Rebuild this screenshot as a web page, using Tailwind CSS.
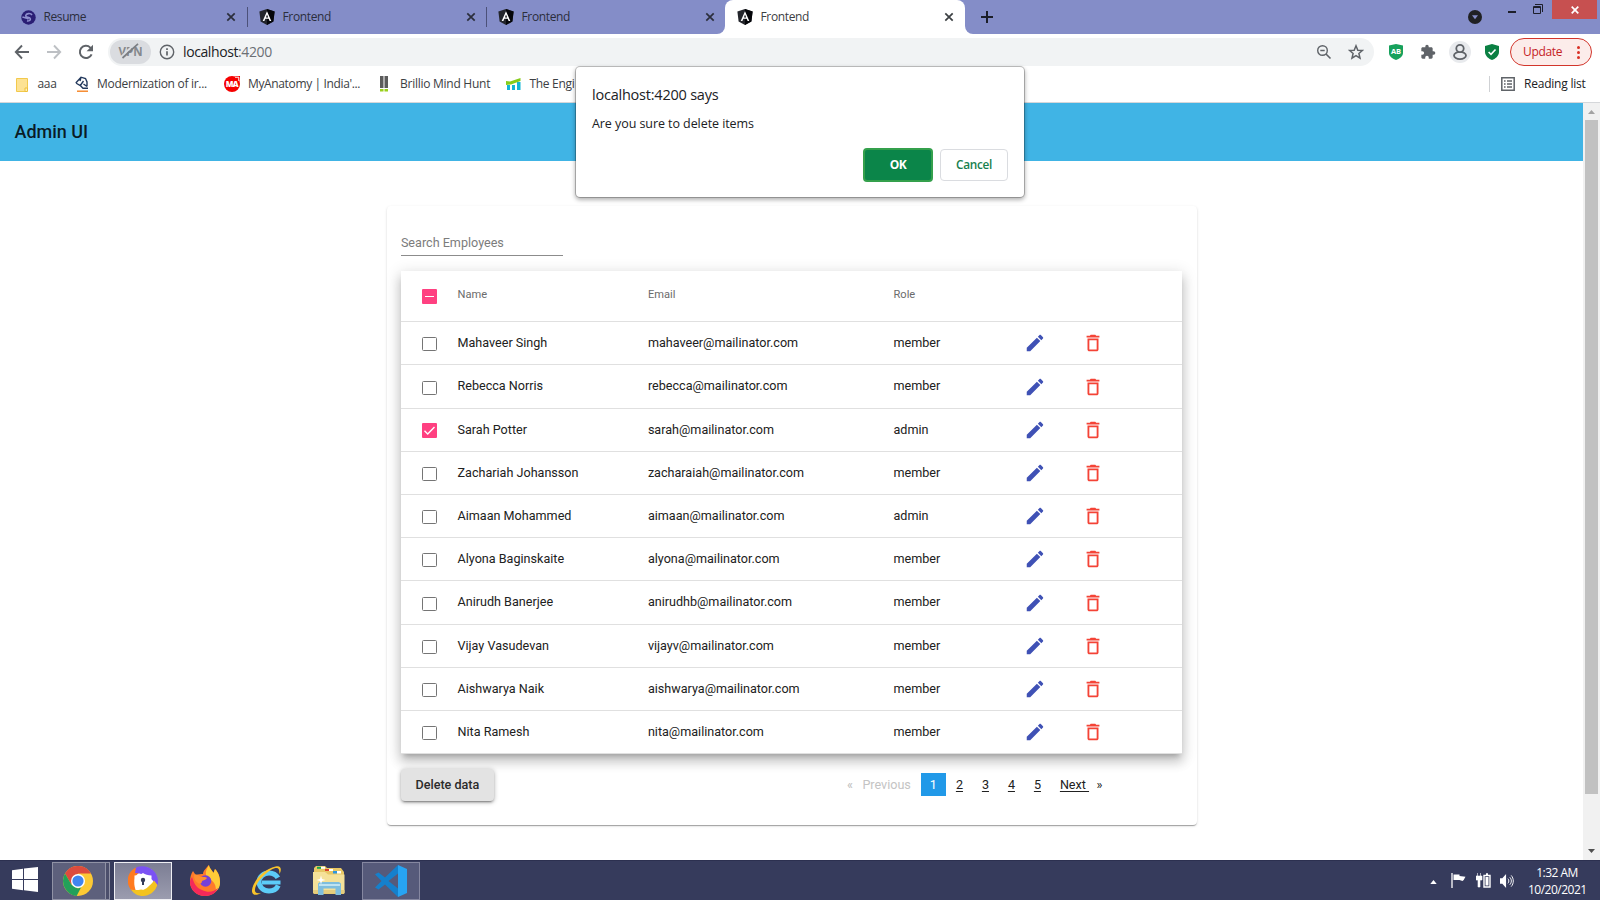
<!DOCTYPE html>
<html lang="en">
<head>
<meta charset="utf-8">
<title>Frontend</title>
<script src="https://cdn.jsdelivr.net/npm/@tailwindcss/browser@4"></script>
</head>
<body class="w-[1600px] h-[900px] overflow-hidden bg-white flex flex-col relative font-['Open_Sans',sans-serif] text-[12px] text-[#3c4043]">

<svg class="hidden">
  <symbol id="angular" viewBox="0 0 16 16"><path d="M8 0 15.6 2.6 14.4 12.6 8 16 1.600 12.6.4 2.600z" fill="#23252b"/><path d="M8 0 15.600 2.600 14.400 12.600 8 16z" fill="#05060a"/><path d="M8 2.200 3.700 12h1.700l.9-2.200h3.400l.9 2.200h1.700zM8 5.400 9.100 8.400H6.900z" fill="#fff"/></symbol>
  <symbol id="x" viewBox="0 0 10 10"><path d="M1.300 1.300 8.700 8.700M8.700 1.300 1.300 8.700" stroke="currentColor" stroke-width="1.700" fill="none"/></symbol>
  <symbol id="edit" viewBox="0 0 24 24"><path d="M3 17.250V21h3.750L17.810 9.940l-3.750-3.750L3 17.250zM20.710 7.040c.39-.39.39-1.020 0-1.410l-2.340-2.340c-.39-.39-1.020-.39-1.410 0l-1.830 1.830 3.750 3.750 1.830-1.830z" fill="#3f51b5"/></symbol>
  <symbol id="trash" viewBox="0 0 24 24"><path d="M6 19c0 1.100.9 2 2 2h8c1.100 0 2-.9 2-2V7H6v12zM8 9h8v10H8V9zm7.500-5-1-1h-5l-1 1H5v2h14V4z" fill="#f44336"/></symbol>
</svg>

<!-- Tab strip -->
<div class="h-[34px] shrink-0 bg-[#848dc8] flex text-[#2b2e3c]">
  <div class="w-[248px] flex items-center pl-[20.500px] pr-[11px] border-r border-transparent">
    <svg class="size-[15px]" viewBox="0 0 16 16"><circle cx="8" cy="8" r="7.700" fill="#2a1e74"/><path d="M11.800 5.200C10 3 5.500 3.500 5 6c-.3 2.300 4.500 1.300 5 3.400.3 1.800-2 2.600-3.600 2.200M1.500 7.500C4 8.500 7 8 8 10" stroke="#8f90cf" stroke-width="1.700" fill="none"/></svg>
    <span class="ml-[8px] text-[12px] tracking-[-0.400px]">Resume</span>
    <svg class="ml-auto size-[10px]"><use href="#x"/></svg>
  </div>
  <div class="w-px h-5 mt-[7px] bg-[#4c5179] -ml-px"></div>
  <div class="w-[238px] flex items-center pl-[11px] pr-[10px]">
    <svg class="size-4"><use href="#angular"/></svg>
    <span class="ml-[7.500px] text-[12px] tracking-[-0.350px]">Frontend</span>
    <svg class="ml-auto size-[10px]"><use href="#x"/></svg>
  </div>
  <div class="w-px h-5 mt-[7px] bg-[#4c5179]"></div>
  <div class="w-[238px] flex items-center pl-[11px] pr-[10px]">
    <svg class="size-4"><use href="#angular"/></svg>
    <span class="ml-[7.500px] text-[12px] tracking-[-0.350px]">Frontend</span>
    <svg class="ml-auto size-[10px]"><use href="#x"/></svg>
  </div>
  <div class="relative w-[240px] flex items-center pl-[12px] pr-[11px] bg-white rounded-t-lg text-[#3c4043]">
    <div class="absolute bottom-0 -left-2 size-2 bg-white"><div class="size-2 bg-[#848dc8] rounded-br-lg"></div></div>
    <div class="absolute bottom-0 -right-2 size-2 bg-white"><div class="size-2 bg-[#848dc8] rounded-bl-lg"></div></div>
    <svg class="size-4"><use href="#angular"/></svg>
    <span class="ml-[7.500px] text-[12px] tracking-[-0.350px]">Frontend</span>
    <svg class="ml-auto size-[10px]"><use href="#x"/></svg>
  </div>
  <svg class="ml-4 mt-[11px] size-3" viewBox="0 0 12 12"><path d="M6 0v12M0 6h12" stroke="#1b1d29" stroke-width="2"/></svg>
  <div class="ml-auto flex pr-[3px]">
    <svg class="mt-[10px] size-[14px] mr-[26px]" viewBox="0 0 14 14"><circle cx="7" cy="7" r="7" fill="#202124"/><path d="M4 5.200h6L7 9.300z" fill="#848dc8"/></svg>
    <div class="mt-[11px] w-2 h-[2px] mr-[17px] bg-[#1d1f2b]"></div>
    <svg class="mt-1 mr-[9px] w-[10px] h-[10px]" viewBox="0 0 10 10"><path d="M.5 2.500h7v7h-7zM.5 3.500h7M2 .5h7.500V8" stroke="#1d1f2b" fill="none"/></svg>
    <div class="w-[45px] h-[19px] bg-[#c75050] text-white grid place-items-center"><svg class="size-[8px]" viewBox="0 0 8 8"><path d="M.7.7l6.600 6.600M7.300.7.700 7.300" stroke="#fff" stroke-width="1.700"/></svg></div>
  </div>
</div>

<!-- Toolbar -->
<div class="h-[36px] shrink-0 flex items-center pl-[14px] pr-2 text-[#5f6368]">
  <svg class="size-4" viewBox="0 0 16 16"><path d="M15 8H2M8 1.500 1.800 8 8 14.500" stroke="#5f6368" stroke-width="1.900" fill="none"/></svg>
  <svg class="ml-4 size-4" viewBox="0 0 16 16"><path d="M1 8h13M8 1.500 14.200 8 8 14.500" stroke="#bdc0c4" stroke-width="1.900" fill="none"/></svg>
  <svg class="ml-4 size-4" viewBox="0 0 16 16"><path d="M13.600 10.300A6.100 6.100 0 1 1 12.300 3.600l1.500 1.500" stroke="#5f6368" stroke-width="2" fill="none"/><path d="M15 .8v6.400H8.600z" fill="#5f6368"/></svg>
  <div class="ml-[14px] w-[1266px] h-[28px] rounded-full bg-[#f1f3f4] flex items-center pl-[2px] pr-[10px]">
    <div class="relative w-[41px] h-6 rounded-full bg-[#dadce0] grid place-items-center">
      <span class="text-[11.500px] font-bold text-[#85888d] leading-none">VPN</span>
      <svg class="absolute left-[8px] top-[3px] w-[22px] h-[16px]" viewBox="0 0 22 16"><path d="M3.500 13.500 17 .5" stroke="#dadce0" stroke-width="1.800"/><path d="M4.500 15 20 .8" stroke="#7b7e83" stroke-width="1.700"/></svg>
    </div>
    <svg class="ml-2 size-4" viewBox="0 0 16 16"><circle cx="8" cy="8" r="6.700" fill="none" stroke="#5f6368" stroke-width="1.400"/><path d="M8 7.200v4.300M8 4.200v1.700" stroke="#5f6368" stroke-width="1.700"/></svg>
    <span class="ml-2 mb-px text-[14px] tracking-[-0.400px] text-[#202124]">localhost<span class="text-[#6b6f74]">:4200</span></span>
    <svg class="ml-auto size-4" viewBox="0 0 16 16"><circle cx="6.500" cy="6.500" r="4.800" fill="none" stroke="#5f6368" stroke-width="1.400"/><path d="M10 10l4.500 4.500M4.300 6.500h4.400" stroke="#5f6368" stroke-width="1.600"/></svg>
    <svg class="ml-4 size-4" viewBox="0 0 16 16"><path d="M8 1.800 9.800 6.200l4.600.3-3.500 3 1.100 4.600L8 11.600l-4 2.500 1.100-4.600-3.500-3 4.600-.3z" fill="none" stroke="#5f6368" stroke-width="1.500"/></svg>
  </div>
  <div class="flex items-center flex-1">
    <svg class="ml-[15px] w-[14px] h-4" viewBox="0 0 14 16"><path d="M7 0 14 1.500V9c0 3.500-4 6-7 7-3-1-7-3.500-7-7V1.500z" fill="#17a15c"/><text x="7" y="9.800" font-family="Open Sans" font-size="7.500" font-weight="700" fill="#fff" text-anchor="middle">AB</text></svg>
    <svg class="ml-[17px] size-[16px]" viewBox="0 0 24 24"><path d="M20.500 11H19V7c0-1.100-.9-2-2-2h-4V3.500a2.500 2.500 0 0 0-5 0V5H4c-1.100 0-2 .9-2 2v3.800h1.500a2.700 2.700 0 0 1 0 5.400H2V20c0 1.100.9 2 2 2h3.800v-1.500a2.700 2.700 0 0 1 5.400 0V22H17c1.100 0 2-.9 2-2v-4h1.500a2.500 2.500 0 0 0 0-5z" fill="#5f6368"/></svg>
    <svg class="ml-[13px] size-[22px]" viewBox="0 0 22 22"><circle cx="11" cy="11" r="11" fill="#e8eaed"/><ellipse cx="11" cy="14.500" rx="6" ry="3.600" fill="none" stroke="#5f6368" stroke-width="1.800"/><circle cx="11" cy="7.500" r="3.700" fill="#e8eaed" stroke="#5f6368" stroke-width="1.800"/></svg>
    <svg class="ml-[14px] w-[14px] h-4" viewBox="0 0 14 16"><path d="M7 0 14 2v6c0 4-4 7-7 8-3-1-7-4-7-8V2z" fill="#0b8043"/><path d="M3.600 8 6 10.300 10.500 5.500" stroke="#fff" stroke-width="1.600" fill="none"/></svg>
    <div class="ml-auto w-[82px] h-[28px] border border-[#d2352b] bg-[#fcecea] rounded-full flex items-center pl-3 pr-[11px] text-[#c5221f]">
      <span class="mb-px text-[12px] tracking-[-0.350px]">Update</span>
      <svg class="ml-auto w-[3px] h-[13px]" viewBox="0 0 3 13"><circle cx="1.500" cy="1.500" r="1.500" fill="#d93025"/><circle cx="1.500" cy="6.500" r="1.500" fill="#d93025"/><circle cx="1.500" cy="11.500" r="1.500" fill="#d93025"/></svg>
    </div>
  </div>
</div>

<!-- Bookmarks -->
<div class="h-[33px] shrink-0 flex items-center pl-4 pr-[14px] pb-[4px] border-b border-[#d5d7da] text-[12px] tracking-[-0.300px] whitespace-nowrap">
  <svg class="mt-px w-[12px] h-[14px]" viewBox="0 0 12 14"><path d="M.5.5h11v9.500L9 13.500H.5z" fill="#fde293" stroke="#f2c94c"/><path d="M9 13.500v-3.500h2.500v3.500z" fill="#fff0b8" stroke="#eec03a"/></svg>
  <span class="ml-[9.500px] mb-px w-[18.500px]">aaa</span>
  <svg class="ml-[19px] w-[14px] h-4" viewBox="0 0 14 16"><path d="M.8 7 6 1.200 10.500 2.500 12 6v4.500M.8 7l4.500 2.500L8.500 5M6 1.200 5 5M5.300 9.500 8 12.300h5M12 10.500 8.500 8" stroke="#23395d" stroke-width="1.400" fill="none"/><path d="M2 15.200h11" stroke="#f58220" stroke-width="1.400"/></svg>
  <span class="ml-[8px] mb-px w-[112px]">Modernization of ir...</span>
  <svg class="ml-[15px] size-4" viewBox="0 0 16 16"><circle cx="8" cy="8" r="8" fill="#f50000"/><path d="M10.500 0H16v5z" fill="#f50000"/><path d="M11 1.200h3.800v3.800" stroke="#fff" fill="none"/><text x="7.700" y="11" font-family="Open Sans" font-size="8" font-weight="800" letter-spacing="-.8" fill="#fff" text-anchor="middle">MA</text></svg>
  <span class="ml-[8px] mb-px w-[112px] tracking-[-0.360px]">MyAnatomy | India'...</span>
  <svg class="ml-[20px] w-2 h-4" viewBox="0 0 8 16"><path d="M0 0h3.500v12H0zM4.500 0H8v12H4.500z" fill="#5b5b5b"/><path d="M0 13h3.500v2.500H0zM4.500 13H8v2.500H4.500z" fill="#9ad01c"/></svg>
  <span class="ml-[12px] mb-px w-[90px] tracking-[-0.260px]">Brillio Mind Hunt</span>
  <svg class="ml-4 w-[15px] h-[12px]" viewBox="0 0 15 12"><path d="M1 7h3v5H1zM6 7h3v5H6zM11 4h3.500v8H11z" fill="#12b5d6"/><path d="M0 3 4 3.500 14.500 0v3L5 6.500 0 7z" fill="#86cc1a"/></svg>
  <span class="ml-[8.500px] mb-px">The Engi</span>
  <div class="ml-auto w-px h-4 bg-[#cfd1d4]"></div>
  <svg class="ml-[11px] size-[14px]" viewBox="0 0 14 14"><path d="M.8.8h12.400v12.400H.8z" fill="none" stroke="#5f6368" stroke-width="1.500"/><path d="M3 4h1.600M6 4h5M3 7h1.600M6 7h5M3 10h1.600M6 10h5" stroke="#5f6368" stroke-width="1.400"/></svg>
  <span class="ml-[9px] mb-px w-[62px] tracking-[-0.220px] text-[#202124]">Reading list</span>
</div>

<!-- Page -->
<div class="h-[757px] shrink-0 flex font-[Roboto,sans-serif]">
  <div class="w-[1583px] flex flex-col items-center">
    <div class="w-full h-[58px] shrink-0 bg-[#40b4e5] flex items-center pl-[14.500px] pb-[2px] text-[18px] font-medium text-black/85">Admin UI</div>
    <div class="mt-[45px] w-[810px] h-[619px] rounded-[4px] bg-white shadow-[0_2px_1px_-1px_rgba(0,0,0,.2),0_1px_1px_0_rgba(0,0,0,.14),0_1px_3px_0_rgba(0,0,0,.12)] pl-[14.400px] pr-[14.400px] flex flex-col">
      <div class="mt-[24px] w-[162px] h-[26px] border-b border-[#8c8c8c] text-[12.600px] leading-[26px] text-[#7c7c7c]">Search Employees</div>
      <div class="mt-[15px] shadow-[0_5px_5px_-3px_rgba(0,0,0,.2),0_8px_10px_1px_rgba(0,0,0,.14),0_3px_14px_2px_rgba(0,0,0,.12)]">
        <div class="h-[51.300px] border-b border-[#e0e0e0] flex items-center text-[11.100px] text-[#6b6b6b]">
          <div class="w-[56.600px] pl-[21px] flex"><svg class="size-[15px]" viewBox="0 0 15 15"><rect width="15" height="15" rx="1" fill="#ff4081"/><path d="M3 7.500h9" stroke="#fff" stroke-width="1"/></svg></div>
          <div class="w-[190.400px] pb-[1px]">Name</div>
          <div class="w-[245.600px] pb-[1px]">Email</div>
          <div class="pb-[1px]">Role</div>
        </div>
        <div id="rows"></div>
      </div>
      <div class="mt-[14.700px] flex items-start text-[12.600px] text-[#212121]">
        <button class="w-[93px] h-[32px] pt-[1px] rounded-[4px] bg-[#e3e3e3] font-medium text-[#2b2b2b] shadow-[0_3px_1px_-2px_rgba(0,0,0,.2),0_2px_2px_0_rgba(0,0,0,.14),0_1px_5px_0_rgba(0,0,0,.3)]">Delete data</button>
        <div class="mt-1 ml-[353px] h-[23px] flex items-center whitespace-pre">
          <span class="w-[15.500px] pt-[2px] text-[#bdbdbd]">«</span>
          <span class="w-[58.500px] pt-[2px] text-[#c4c4c4]">Previous</span>
          <span class="w-[25px] h-[23px] leading-[23px] text-center bg-[#2199e8] text-white">1</span>
          <span class="w-[26px] pt-[2px] ml-[10px] underline underline-offset-2">2</span>
          <span class="w-[26px] pt-[2px] underline underline-offset-2">3</span>
          <span class="w-[26px] pt-[2px] underline underline-offset-2">4</span>
          <span class="w-[26px] pt-[2px] underline underline-offset-2">5</span>
          <span class="w-[36.500px] pt-[2px] underline underline-offset-2">Next </span>
          <span class="pt-[2px]">»</span>
        </div>
      </div>
    </div>
  </div>
  <!-- Scrollbar -->
  <div class="w-[17px] bg-[#f1f1f1] flex flex-col items-center">
    <svg class="mt-[7px] w-[7px] h-[4px]" viewBox="0 0 7 4"><path d="M0 4 3.500 0 7 4z" fill="#a3a3a3"/></svg>
    <div class="mt-[6px] w-[13px] h-[674px] bg-[#c1c1c1]"></div>
    <svg class="mt-[55px] w-[7px] h-[4px]" viewBox="0 0 7 4"><path d="M0 0 3.500 4 7 0z" fill="#505050"/></svg>
  </div>
</div>

<!-- Taskbar -->
<div class="h-[40px] shrink-0 bg-[#363b5c] border-t border-[#2c3050] flex items-center text-white">
  <svg class="ml-3 -mt-[2px] w-[26px] h-[25px]" viewBox="0 0 26 25"><path d="M0 3.300 11 1.800V12H0zM12 1.600 26 0v12H12zM0 13h11v10.300L0 21.800zM12 13h14v12l-14-1.700z" fill="#fff"/></svg>
  <div class="ml-[14px] w-[54px] h-[38px] border border-[#9092a5] bg-[#5d607c] flex items-center pl-[10px]">
    <svg class="size-[30px]" viewBox="0 0 30 30"><circle cx="15" cy="15" r="15" fill="#fcc934"/><path d="M2 7.500A15 15 0 0 1 28 7.500H15L8.500 18.700z" fill="#dd4b3e"/><path d="M2 7.500 8.500 18.700 15 22.500 18.300 21 13.600 29.900A15 15 0 0 1 2 7.500z" fill="#22a05a"/><circle cx="15" cy="15" r="7" fill="#fff"/><circle cx="15" cy="15" r="5.600" fill="#3f85f0"/></svg>
  </div>
  <div class="w-[4px] h-[38px] border border-l-0 border-[#9092a5] bg-[#4c4f6c]"></div>
  <div class="ml-[4px] w-[58px] h-[38px] border border-[#eeeef3] bg-gradient-to-b from-[#7c7e94] to-[#9b9caf] grid place-items-center">
    <svg class="size-[30px]" viewBox="0 0 30 30"><circle cx="15" cy="15" r="14" fill="#fff"/><path d="M9 1.200C-1 5-3 17 3.500 24.500L8 25C5 17 5 9 15 4.500z" fill="#ff7a1f"/><path d="M8 1.500C18-3 31 4 30 17c-.2 2-1 4-2 5C27 14 20 8 7 7z" fill="#7b52f4"/><path d="M3 23.500c8 2 18-1 23-9l3.500 4.500C27 26 21 30 15 30 10 30 6 28 3 23.500z" fill="#f4c320"/><path d="M6.500 9.500C10 9.500 13 8.500 15 7c2 1.500 5 2.500 8.500 2.500C24 17 21 22 15 24 9 22 6 17 6.500 9.500z" fill="#fff"/><circle cx="15" cy="14" r="2.200" fill="#343a56"/><path d="M14 14h2v5h-2z" fill="#343a56"/></svg>
  </div>
  <svg class="ml-[18px] -mt-px w-[30px] h-[31px]" viewBox="0 0 30 31"><path d="M3 6c1 1 1.500 3 3 4 2-1 5-1 7-1 0-3 4-7 6-9 0 3 3 5 4.500 8L25 4c4 4 5 9 5 13 0 8-7 14-15 14S0 25 0 17C0 12 1 9 3 6z" fill="#ff7a2a"/><path d="M19 0c0 3 3 5 4.500 8L25 4c4 4 5 9 5 13 0 4-1 7-4 9 0-9-4-10-8-13-3-3-3-7 1-13z" fill="#ffcb38"/><path d="M0 17c0 8 7 14 15 14 6 0 11-3 13-8-4 4-10 5-16 2C6 23 4 18 2 12 1 14 0 15 0 17z" fill="#f5295a"/><circle cx="15.500" cy="16" r="5.800" fill="#7440d8"/><path d="M4 10c2-1 5 0 7 2 2 0 5-.5 6 1-1 2-4 2-5 3 0 3-3 3-4 2-3-2-4-4-4-8z" fill="#ff9030"/></svg>
  <svg class="ml-[32px] -mt-px w-[30px] h-[31px]" viewBox="0 0 30 31"><ellipse cx="17" cy="17" rx="10" ry="9" fill="none" stroke="#5cccf8" stroke-width="5" stroke-dasharray="51.500 20" stroke-dashoffset="-3.500"/><path d="M10 15.500h18.500v4H10z" fill="#5cccf8"/><path d="M27.500 9c2.500-5 1.500-9-4-7.500C12 4 1 16 0 25c-.5 6 5 5.500 9 3-4 1-6.500 0-6-3.500C4 17 15 6 22 3.500c4.500-1.500 5.500.5 5.500 5.500z" fill="#f9c32b"/></svg>
  <svg class="ml-[31px] w-[32px] h-[30px]" viewBox="0 0 32 30"><path d="M1 2 3 0h9l2 2h14l3 4v22H1z" fill="#e8c765"/><path d="M4 .8h4v2H4z" fill="#19a84a"/><path d="M8 .8h4v2H8zM16 3h4v2h-4z" fill="#fff"/><path d="M12 3h4v2h-4z" fill="#d9402c"/><path d="M20 5h4v2.500h-4z" fill="#2d95e0"/><path d="M24 5h4v2.500h-4z" fill="#fff"/><path d="M0 6h12l3 2.500h16.500V27H0z" fill="#f5e199"/><path d="M0 24h31.500v3.500H0z" fill="#e5cd7e"/><path d="M5 17.500 7 16h19l2 1.500V29h-5.500v-6.500h-12V29H5z" fill="#7fbede"/><path d="M6 18h21v2H6z" fill="#bfe3f2"/><path d="M8 9.500 9 13l3.500 1L9 15l-1 3.500L7 15l-3.500-1L7 13z" fill="#fff"/></svg>
  <div class="ml-[17px] w-[58px] h-[38px] border border-[#8587a0] bg-[#565a7a] grid place-items-center">
    <svg class="size-[32px]" viewBox="0 0 32 32"><path d="M23 0 10 12.500 3.500 7.500 0 9.300 6.500 16 0 22.500 3.500 24.500 10 19.500 23 32V23.500L13.500 16 23 8.500z" fill="#1580cc"/><path d="M23 0l9 4v24l-9 4z" fill="#27a4f2"/></svg>
  </div>
  <div class="ml-auto flex items-center pr-[14px]">
    <svg class="w-[7px] h-[4px] mt-[2px]" viewBox="0 0 8 5"><path d="M0 5 4 0l4 5z" fill="#fff"/></svg>
    <svg class="ml-[14px] w-[15px] h-[15px]" viewBox="0 0 15 15"><path d="M1 0v15" stroke="#fff" stroke-width="1.300"/><path d="M2.500 1.500h6V3l6 .7c-1 1-1 3-3 4.300l-3-1H2.500z" fill="#fff"/></svg>
    <svg class="ml-[10px] w-[15px] h-[15px]" viewBox="0 0 15 15"><path d="M1.500 0v3M4.500 0v3M0 3h6v4H4v7H2V7H0z" fill="#fff" stroke="#fff" stroke-width=".6"/><path d="M8 2.500h6v11.500H8zM10 1h2" stroke="#fff" stroke-width="1.400" fill="none"/><path d="M9.500 4h3v8.500h-3z" fill="#fff"/></svg>
    <svg class="ml-[9px] w-[14px] h-[14px]" viewBox="0 0 15 15"><path d="M0 4.500h2.500L6.500 0v15l-4-4.500H0z" fill="#fff"/><path d="M8.500 5c1.300 1.500 1.300 3.500 0 5M10.500 3.500c2.200 2.500 2.200 5.500 0 8M12 1.500c3 3.500 3 8.500 0 12" stroke="#fff" fill="none"/></svg>
    <div class="ml-[14px] w-[58px] text-center text-[12px] leading-[17px] tracking-[-0.500px] whitespace-nowrap">1:32 AM<br>10/20/2021</div>
  </div>
</div>

<!-- Confirmation dialog -->
<div class="absolute left-[576px] top-[67px] w-[448px] h-[130px] rounded-[4px] bg-white shadow-[0_0_0_1px_rgba(0,0,0,.22),0_2px_4px_1px_rgba(0,0,0,.3)] pl-4 pr-4 pt-[18px] flex flex-col text-[#202124]">
  <div class="text-[14.500px] leading-[20px] tracking-[-0.220px]">localhost:4200 says</div>
  <div class="mt-[10px] text-[12.500px] leading-[18px] tracking-[-0.070px]">Are you sure to delete items</div>
  <div class="mt-[15px] flex justify-end items-center gap-[7px] text-[12px] font-semibold">
    <button class="w-[70px] h-[34px] rounded-[4px] border-2 border-[#34a04c] bg-[#0b8549] text-white font-bold tracking-[-0.400px]">OK</button>
    <button class="w-[68px] h-[32px] rounded-[4px] border border-[#dadce0] text-[#17804d] text-[11.800px] tracking-[-0.300px]">Cancel</button>
  </div>
</div>

<script>
const people = [
  ["Mahaveer Singh", "mahaveer@mailinator.com", "member"],
  ["Rebecca Norris", "rebecca@mailinator.com", "member"],
  ["Sarah Potter", "sarah@mailinator.com", "admin", true],
  ["Zachariah Johansson", "zacharaiah@mailinator.com", "member"],
  ["Aimaan Mohammed", "aimaan@mailinator.com", "admin"],
  ["Alyona Baginskaite", "alyona@mailinator.com", "member"],
  ["Anirudh Banerjee", "anirudhb@mailinator.com", "member"],
  ["Vijay Vasudevan", "vijayv@mailinator.com", "member"],
  ["Aishwarya Naik", "aishwarya@mailinator.com", "member"],
  ["Nita Ramesh", "nita@mailinator.com", "member"],
];
const on = '<svg class="size-[15px] mt-[2px]" viewBox="0 0 15 15"><rect width="15" height="15" rx="1" fill="#ff4081"/><path d="M2.500 7.800 5.700 11 12.500 4" stroke="#fff" stroke-width="1.400" fill="none"/></svg>';
const off = '<div class="w-[15px] h-[14px] mt-[2px] border-[1.500px] border-[#757575] rounded-[1.500px]"></div>';
document.getElementById("rows").innerHTML = people.map(p => `
  <div class="h-[43.200px] border-b border-[#e0e0e0] flex items-center text-[12.600px] text-[#212121]">
    <div class="w-[56.600px] pl-[21px] flex">${p[3] ? on : off}</div>
    <div class="w-[190.400px] pt-[0.600px]">${p[0]}</div>
    <div class="w-[245.600px] pt-[0.600px]">${p[1]}</div>
    <div class="w-[131px] pt-[0.600px]">${p[2]}</div>
    <svg class="size-[22px]"><use href="#edit"/></svg>
    <svg class="ml-[35.500px] size-[22px]"><use href="#trash"/></svg>
  </div>`).join("");
</script>
</body>
</html>
